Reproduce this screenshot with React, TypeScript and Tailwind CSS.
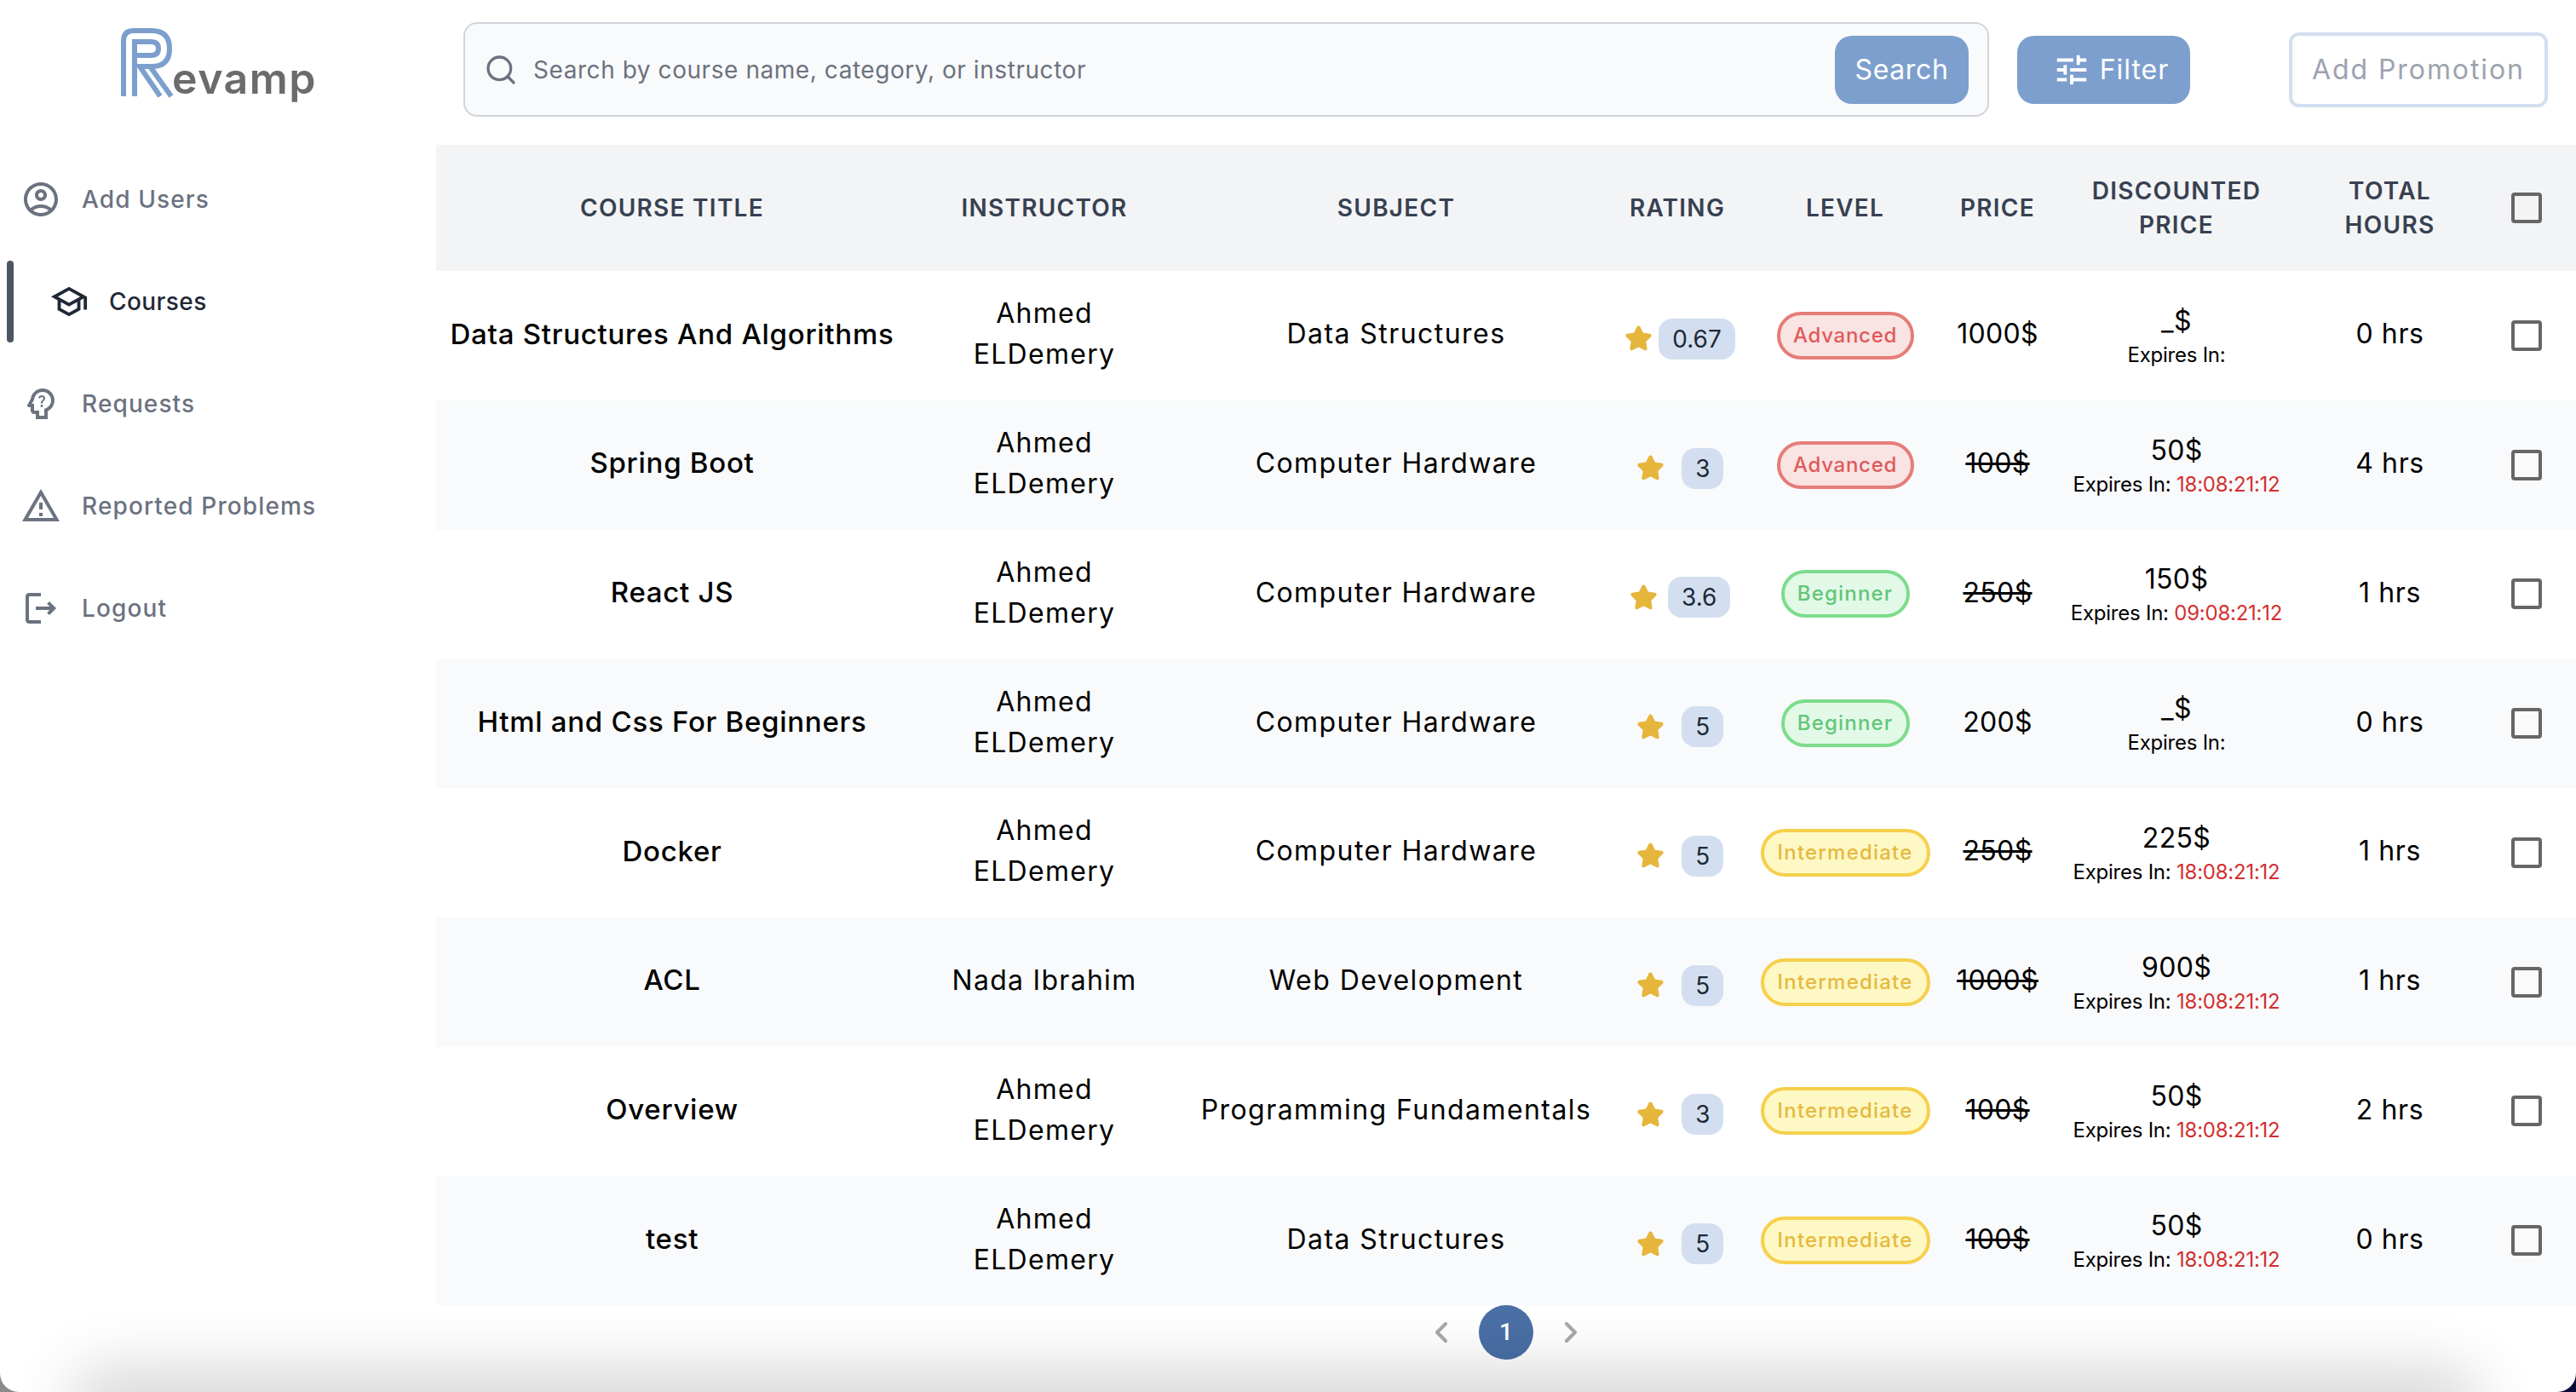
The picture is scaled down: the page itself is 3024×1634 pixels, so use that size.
import { ChevronLeft, ChevronRight, Search, Star } from "lucide-react";
import {
  MdOutlineAccountCircle,
  MdOutlineLogout,
  MdOutlinePsychologyAlt,
  MdOutlineSchool,
  MdOutlineWarningAmber,
  MdTune,
} from "react-icons/md";

type Level = "Advanced" | "Beginner" | "Intermediate";

const AHMED = "Ahmed ELDemery";

const courses: {
  title: string;
  instructor: string;
  subject: string;
  rating: string;
  level: Level;
  price: string;
  struck: boolean;
  discounted: string;
  expires: string;
  hours: string;
}[] = [
  { title: "Data Structures And Algorithms", instructor: AHMED, subject: "Data Structures", rating: "0.67", level: "Advanced", price: "1000$", struck: false, discounted: "_$", expires: "", hours: "0 hrs" },
  { title: "Spring Boot", instructor: AHMED, subject: "Computer Hardware", rating: "3", level: "Advanced", price: "100$", struck: true, discounted: "50$", expires: "18:08:21:12", hours: "4 hrs" },
  { title: "React JS", instructor: AHMED, subject: "Computer Hardware", rating: "3.6", level: "Beginner", price: "250$", struck: true, discounted: "150$", expires: "09:08:21:12", hours: "1 hrs" },
  { title: "Html and Css For Beginners", instructor: AHMED, subject: "Computer Hardware", rating: "5", level: "Beginner", price: "200$", struck: false, discounted: "_$", expires: "", hours: "0 hrs" },
  { title: "Docker", instructor: AHMED, subject: "Computer Hardware", rating: "5", level: "Intermediate", price: "250$", struck: true, discounted: "225$", expires: "18:08:21:12", hours: "1 hrs" },
  { title: "ACL", instructor: "Nada Ibrahim", subject: "Web Development", rating: "5", level: "Intermediate", price: "1000$", struck: true, discounted: "900$", expires: "18:08:21:12", hours: "1 hrs" },
  { title: "Overview", instructor: AHMED, subject: "Programming Fundamentals", rating: "3", level: "Intermediate", price: "100$", struck: true, discounted: "50$", expires: "18:08:21:12", hours: "2 hrs" },
  { title: "test", instructor: AHMED, subject: "Data Structures", rating: "5", level: "Intermediate", price: "100$", struck: true, discounted: "50$", expires: "18:08:21:12", hours: "0 hrs" },
];

const levelStyle: Record<Level, string> = {
  Advanced: "w-[161px] border-[#e57c78] bg-[#f9e3e3] text-[#e05a5a] tracking-[0.03em]",
  Beginner: "w-[151px] border-[#7ddc8c] bg-[#e3f9e8] text-[#62c678] tracking-[0.05em]",
  Intermediate: "w-[199px] border-[#f6d04d] bg-[#fef8c4] text-[#e6b93f] tracking-[0.05em]",
};

const navItems = [
  { label: "Add Users", icon: MdOutlineAccountCircle },
  { label: "Courses", icon: MdOutlineSchool, active: true },
  { label: "Requests", icon: MdOutlinePsychologyAlt },
  { label: "Reported Problems", icon: MdOutlineWarningAmber },
  { label: "Logout", icon: MdOutlineLogout },
];

function Logo() {
  return (
    <div className="flex h-[174px] items-start pl-[140px] pt-[31px]">
      <svg width="64" height="86" viewBox="0 0 64 86" fill="none" stroke="#7c9fcd" strokeWidth="6">
        <path d="M5 82V17Q5 5 17 5H38Q59 5 59 26Q59 47 38 47H24L48 82" />
        <path d="M18 82V18H37Q46 18 46 26Q46 34 37 34H18" />
        <path d="M36 47L61 82" />
      </svg>
      <span className="ml-[-2px] mt-[31px] text-[50px] leading-[60px] font-semibold tracking-[0.03em] text-[#6b6b6b]">
        evamp
      </span>
    </div>
  );
}

function Sidebar() {
  return (
    <aside className="w-[512px] shrink-0">
      <Logo />
      <nav className="flex flex-col">
        {navItems.map((item) => {
          const Icon = item.icon;
          return item.active ? (
            <div key={item.label} className="relative flex h-[120px] items-center pl-[58px] text-[#1f2937]">
              <span className="absolute left-[8px] top-[12px] h-[96px] w-[8px] rounded-full bg-[#4b5563]" />
              <Icon className="size-[46px]" />
              <span className="ml-[24px] text-[28px] font-medium tracking-[0.015em]">{item.label}</span>
            </div>
          ) : (
            <div key={item.label} className="flex h-[120px] items-center pl-[24px] text-[#6b7280]">
              <Icon className="size-[48px]" />
              <span className="ml-[24px] text-[28px] font-medium tracking-[0.04em]">{item.label}</span>
            </div>
          );
        })}
      </nav>
    </aside>
  );
}

function TopBar() {
  return (
    <div className="flex h-[170px] items-center pb-[7px] pl-[32px]">
      <div className="flex h-[111px] w-[1791px] items-center rounded-[16px] border-2 border-[#d1d5db] bg-[#f9fafb] pl-[22px] pr-[22px]">
        <Search className="size-[40px] text-[#6b7280]" strokeWidth={2} />
        <span className="ml-[18px] flex-1 text-[28px] tracking-[0.02em] text-[#6b7280]">
          Search by course name, category, or instructor
        </span>
        <button className="h-[80px] w-[157px] rounded-[20px] bg-[#7c9fcd] text-[32px] tracking-[0.02em] text-white">
          Search
        </button>
      </div>
      <button className="ml-[33px] flex h-[80px] w-[203px] items-center justify-center gap-[10px] rounded-[20px] bg-[#7c9fcd] pl-[16px] text-[32px] tracking-[0.03em] text-white">
        <MdTune className="size-[46px]" />
        Filter
      </button>
      <button className="ml-[116px] h-[88px] w-[304px] rounded-[12px] border-4 border-[#d3dff0] bg-white text-[32px] tracking-[0.06em] text-[#9ca3af]">
        Add Promotion
      </button>
    </div>
  );
}

function Checkbox() {
  return <span className="mx-auto block size-[36px] rounded-[4px] border-4 border-[#666666]" />;
}

function CourseTable() {
  return (
    <table className="w-[2512px] table-fixed border-collapse text-center text-[32px] text-black">
      <colgroup>
        <col className="w-[554px]" />
        <col className="w-[320px]" />
        <col className="w-[506px]" />
        <col className="w-[154px]" />
        <col className="w-[240px]" />
        <col className="w-[118px]" />
        <col className="w-[302px]" />
        <col className="w-[202px]" />
        <col className="w-[116px]" />
      </colgroup>
      <thead>
        <tr className="h-[148px] bg-[#f3f4f6] text-[28px] leading-[40px] font-semibold tracking-[0.045em] text-[#374151] uppercase">
          <th className="font-semibold">Course Title</th>
          <th className="font-semibold">Instructor</th>
          <th className="font-semibold">Subject</th>
          <th className="font-semibold">Rating</th>
          <th className="font-semibold">Level</th>
          <th className="font-semibold">Price</th>
          <th className="font-semibold">
            Discounted
            <br />
            Price
          </th>
          <th className="pr-[3px] font-semibold">
            Total
            <br />
            Hours
          </th>
          <th>
            <Checkbox />
          </th>
        </tr>
      </thead>
      <tbody>
        {courses.map((course, i) => (
          <tr key={course.title} className={`h-[151.75px] ${i % 2 === 1 ? "bg-[#f9fafb]" : "bg-white"}`}>
            <td className="pb-[3px] text-[33px] font-medium tracking-[0.022em]">{course.title}</td>
            <td className="px-[50px] pb-[3px] leading-[48px] tracking-[0.04em]">{course.instructor}</td>
            <td className="pb-[3px] tracking-[0.045em] whitespace-nowrap">{course.subject}</td>
            <td>
              <div className="ml-auto flex w-[146px] translate-y-[4px] items-center justify-evenly">
                <Star className="-mx-[2px] size-[33px] fill-[#e6b63c] text-[#e6b63c]" strokeWidth={2} />
                <span className="flex h-[48px] items-center rounded-[16px] bg-[#d3dff0] px-[16px] text-[28px] text-[#1f2937]">
                  {course.rating}
                </span>
              </div>
            </td>
            <td>
              <span
                className={`mx-auto flex h-[56px] items-center justify-center rounded-full border-4 text-[24px] font-medium ${levelStyle[course.level]}`}
              >
                {course.level}
              </span>
            </td>
            <td className={`pb-[3px] tracking-[0.01em] ${course.struck ? "line-through" : ""}`}>{course.price}</td>
            <td className="pt-[2px] leading-[44px]">
              <div className="tracking-[0.01em]">{course.discounted}</div>
              <div className="text-[24px] leading-[36px] tracking-[-0.01em] whitespace-nowrap">
                Expires In: <span className="text-[#d32f2f]">{course.expires}</span>
              </div>
            </td>
            <td className="pb-[3px] pr-[3px] tracking-[0.02em]">{course.hours}</td>
            <td>
              <Checkbox />
            </td>
          </tr>
        ))}
      </tbody>
    </table>
  );
}

function Pagination() {
  return (
    <div className="flex items-center justify-center gap-[24px]">
      <ChevronLeft className="size-[40px] text-[#a8a8a8]" strokeWidth={2.5} />
      <span className="flex size-[64px] items-center justify-center rounded-full bg-[#4a6fa5] font-[family-name:Roboto,sans-serif] text-[28px] font-medium text-white">
        1
      </span>
      <ChevronRight className="size-[40px] text-[#a8a8a8]" strokeWidth={2.5} />
    </div>
  );
}

export default function App() {
  return (
    <div className="relative h-[1634px] w-[3024px] overflow-hidden bg-[linear-gradient(90deg,#8a8a8a_50%,#0b0b3a_50%)] font-[family-name:Inter,sans-serif]">
      <div className="flex h-full rounded-b-[22px] bg-white">
        <Sidebar />
        <main className="min-w-0 flex-1">
          <TopBar />
          <CourseTable />
          <Pagination />
        </main>
      </div>
      {/* window shadow bleeding in along the bottom edge */}
      <div className="pointer-events-none absolute bottom-[-30px] left-[110px] right-[140px] h-[30px] rounded-full shadow-[0_0_70px_28px_rgba(0,0,0,0.16)]" />
    </div>
  );
}
